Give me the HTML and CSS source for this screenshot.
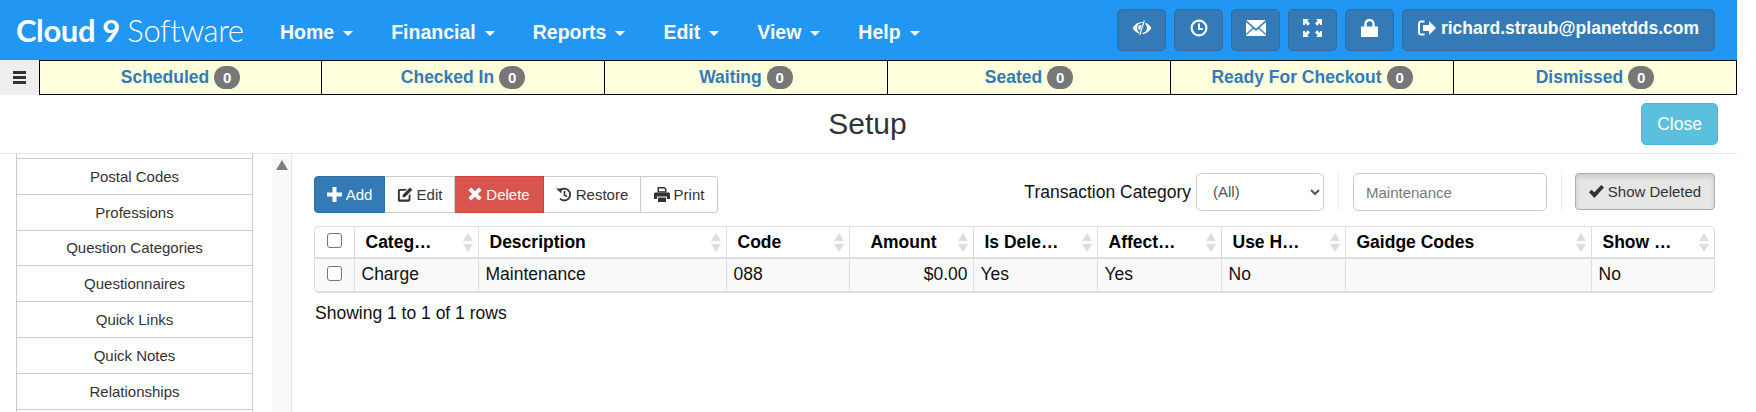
FILE: index.html
```html
<!DOCTYPE html>
<html lang="en">
<head>
  <meta charset="UTF-8" />
  <title>Setup</title>
  <link rel="stylesheet" href="styles.css">
</head>
<body>

<div class="page">
  <div class="navbar">
    <div class="logo"><b>Cloud 9</b> <span>Software</span></div>
    <ul class="menu">
      <li>Home<i class="caret"></i></li>
      <li>Financial<i class="caret"></i></li>
      <li>Reports<i class="caret"></i></li>
      <li>Edit<i class="caret"></i></li>
      <li>View<i class="caret"></i></li>
      <li>Help<i class="caret"></i></li>
    </ul>
    <div class="nav-buttons">
      <button class="nav-btn">
        <svg width="20" height="16" viewBox="0 0 20 16"><path d="M.5 8C3 4 6.500 2 10 2s7 2 9.500 6c-2.500 4-6 6-9.500 6S3 12 .5 8z"/><circle cx="10" cy="8" r="5" fill="#337ab7"/><circle cx="8.800" cy="7.500" r="2.600"/><path d="M12.800 0L7.800 16" stroke="#337ab7" stroke-width="3"/><path d="M12.300 .5L7.800 15" stroke="#fff" stroke-width="1.200"/></svg>
      </button>
      <button class="nav-btn">
        <svg width="18" height="18" viewBox="0 0 18 18"><circle cx="9" cy="9" r="7.400" fill="none" stroke="#fff" stroke-width="2.200"/><path d="M9 4.500V10h4" fill="none" stroke="#fff" stroke-width="2"/></svg>
      </button>
      <button class="nav-btn">
        <svg width="20" height="16" viewBox="0 0 20 16"><path d="M0 0h20L10 8.800z"/><path d="M0 2v12l6.500-6.300z"/><path d="M20 2v12l-6.500-6.300z"/><path d="M0 16v-.6l7.500-6.600L10 11l2.500-2.200 7.500 6.600v.6z"/></svg>
      </button>
      <button class="nav-btn">
        <svg width="19" height="18" viewBox="0 0 19 18"><path d="M0 0h6L4.200 1.800 7 4.600 4.800 6.800 2 4V6H0z"/><path d="M19 0h-6l1.800 1.800L12 4.600l2.200 2.200L17 4v2h2z"/><path d="M0 18h6l-1.800-1.800L7 13.400l-2.200-2.200L2 14v-2H0z"/><path d="M19 18h-6l1.800-1.800L12 13.400l2.200-2.200L17 14v-2h2z"/></svg>
      </button>
      <button class="nav-btn">
        <svg width="17" height="18" viewBox="0 0 17 18"><path d="M0 7.500h17V18H0z"/><path d="M4.500 8.500V5a4 4 0 0 1 8 0v3.500" fill="none" stroke="#fff" stroke-width="2.400"/></svg>
      </button>
      <button class="nav-btn user-btn">
        <svg width="18" height="16" viewBox="0 0 18 16"><path d="M6.500 1.500H3A2 2 0 0 0 1 3.500v9a2 2 0 0 0 2 2h3.500" fill="none" stroke="#fff" stroke-width="2"/><path d="M5 5h6V1l7 7-7 7v-4H5z"/></svg>
        richard.straub@planetdds.com
      </button>
    </div>
  </div>

  <div class="status-bar">
    <div class="side-toggle"><span class="burger"></span></div>
    <div class="tab">Scheduled <span class="badge">0</span></div>
    <div class="tab">Checked In <span class="badge">0</span></div>
    <div class="tab">Waiting <span class="badge">0</span></div>
    <div class="tab">Seated <span class="badge">0</span></div>
    <div class="tab">Ready For Checkout <span class="badge">0</span></div>
    <div class="tab">Dismissed <span class="badge">0</span></div>
  </div>

  <div class="title-row">
    <h1>Setup</h1>
    <button class="close-btn">Close</button>
  </div>

  <div class="main">
    <div class="sidebar">
      <ul class="side-list">
        <li class="sliver"></li>
        <li>Postal Codes</li>
        <li>Professions</li>
        <li>Question Categories</li>
        <li>Questionnaires</li>
        <li>Quick Links</li>
        <li>Quick Notes</li>
        <li>Relationships</li>
      </ul>
      <div class="side-scroll"><i class="arrow-up"></i></div>
    </div>

    <div class="content">
      <div class="toolbar">
        <div class="btn-group">
          <button class="btn add">
            <svg width="15" height="15" viewBox="0 0 15 15"><path d="M5.500 0h4v5.500H15v4H9.500V15h-4V9.500H0v-4h5.500z"/></svg>
            Add
          </button>
          <button class="btn edit">
            <svg width="16" height="15" viewBox="0 0 16 15"><path d="M2.500 2H10L8.200 3.800H3.500a.7.7 0 0 0-.7.7v7.200c0 .4.300.7.700.7h7.400a.7.7 0 0 0 .7-.7V8.500l1.800-1.800v5.800c0 1.300-1 2.300-2.300 2.300H2.500C1.200 14.800.9 13.800.9 12.500V4.300C.9 3 1.200 2 2.500 2z"/><path d="M13 .5l2.300 2.300-7 7-3 .7.700-3z"/></svg>
            Edit
          </button>
          <button class="btn del">
            <svg width="14" height="14" viewBox="0 0 14 14"><path d="M3.200.4L7 4.200 10.800.4l2.800 2.800L9.800 7l3.800 3.800-2.800 2.800L7 9.800l-3.800 3.800-2.800-2.800L4.200 7 .4 3.200z"/></svg>
            Delete
          </button>
          <button class="btn restore">
            <svg width="16" height="15" viewBox="0 0 16 15"><path d="M3.600 4A5.900 5.900 0 1 1 4 11.700" fill="none" stroke="#333" stroke-width="1.800"/><path d="M0 1.500h5.500V6.500z"/><path d="M8.500 4v4l2.500 1.600" fill="none" stroke="#333" stroke-width="1.600"/></svg>
            Restore
          </button>
          <button class="btn print">
            <svg width="16" height="15" viewBox="0 0 16 15"><path d="M3.500 0h7L12.500 2v3.500h-9zM5 1.500v2.800h6V2.600L10 1.500z"/><path d="M1.500 5.500h13c.8 0 1.500.7 1.500 1.500v5h-3V9.500H3V12H0V7c0-.8.700-1.500 1.500-1.500z"/><path d="M4 10.500h8V15H4z"/></svg>
            Print
          </button>
        </div>
        <div class="filters">
          <label class="filter-label">Transaction Category</label>
          <select class="filter-select"><option>(All)</option></select>
          <span class="sep"></span>
          <input class="filter-input" type="text" value="Maintenance" />
          <span class="sep"></span>
          <button class="show-deleted">
            <svg width="15" height="13" viewBox="0 0 15 13"><path d="M0 7.200l2.600-2.500 2.700 2.600L12.300 0 15 2.500 5.400 13z"/></svg>
            Show Deleted
          </button>
        </div>
      </div>

      <div class="table-wrap">
        <table class="grid">
          <colgroup>
            <col class="c-check"><col class="c-cat"><col class="c-desc"><col class="c-code"><col class="c-amt"><col class="c-del"><col class="c-aff"><col class="c-use"><col class="c-gaidge"><col>
          </colgroup>
          <thead>
            <tr>
              <th class="check-cell"><input class="check" type="checkbox" /></th>
              <th><div class="th-in"><span class="th-text">Categ…</span><i class="sort"></i></div></th>
              <th><div class="th-in"><span class="th-text">Description</span><i class="sort"></i></div></th>
              <th><div class="th-in"><span class="th-text">Code</span><i class="sort"></i></div></th>
              <th><div class="th-in right"><span class="th-text">Amount</span><i class="sort"></i></div></th>
              <th><div class="th-in"><span class="th-text">Is Dele…</span><i class="sort"></i></div></th>
              <th><div class="th-in"><span class="th-text">Affect…</span><i class="sort"></i></div></th>
              <th><div class="th-in"><span class="th-text">Use H…</span><i class="sort"></i></div></th>
              <th><div class="th-in"><span class="th-text">Gaidge Codes</span><i class="sort"></i></div></th>
              <th><div class="th-in"><span class="th-text">Show …</span><i class="sort"></i></div></th>
            </tr>
          </thead>
          <tbody>
            <tr>
              <td class="check-cell"><input class="check" type="checkbox" /></td>
              <td>Charge</td>
              <td>Maintenance</td>
              <td>088</td>
              <td class="num">$0.00</td>
              <td>Yes</td>
              <td>Yes</td>
              <td>No</td>
              <td></td>
              <td>No</td>
            </tr>
          </tbody>
        </table>
      </div>
      <p class="rows-info">Showing 1 to 1 of 1 rows</p>
    </div>
  </div>
</div>

</body>
</html>
```

FILE: styles.css
```css
html, body {
  margin: 0;
  padding: 0;
  height: 412px;
  overflow: hidden;
  background-color: white;
  font-family: 'Liberation Sans', Arial, sans-serif;
  color: #333;
}

.page {
  width: 1737px;
  height: 412px;
  display: flex;
  flex-direction: column;
}

button {
  font-family: inherit;
  cursor: pointer;
}

svg {
  fill: currentColor;
  flex: none;
}

/* top bar */
.navbar {
  height: 60px;
  flex: none;
  background-color: #2196f3;
  color: white;
  display: flex;
  align-items: center;
  box-sizing: border-box;
  padding: 0 22px 0 16px;
}

.logo {
  width: 245px;
  font-family: Lato, sans-serif;
  font-size: 31px;
  white-space: nowrap;
  letter-spacing: -0.4px;
}

.logo b {
  font-weight: 700;
}

.logo span {
  font-weight: 300;
}

.menu {
  list-style: none;
  margin: 0;
  padding: 4px 0 0;
  display: flex;
  flex: 1;
}

.menu li {
  padding: 0 19px;
  font-size: 19.5px;
  font-weight: bold;
  white-space: nowrap;
}

.caret {
  display: inline-block;
  margin-left: 9px;
  vertical-align: 3px;
  border-top: 5px solid white;
  border-left: 5px solid transparent;
  border-right: 5px solid transparent;
}

.nav-buttons {
  display: flex;
  gap: 8px;
}

.nav-btn {
  width: 49px;
  height: 42px;
  padding: 0 0 4px;
  background-color: #337ab7;
  border: 1px solid #2e6da4;
  border-radius: 5px;
  color: white;
  display: flex;
  align-items: center;
  justify-content: center;
}

.user-btn {
  width: 313px;
  gap: 5px;
  font-size: 17.5px;
  font-weight: bold;
}

/* status tabs */
.status-bar {
  height: 35px;
  flex: none;
  display: flex;
}

.side-toggle {
  width: 39px;
  background-color: #eee;
  display: flex;
  align-items: center;
  justify-content: center;
}

.burger {
  width: 13px;
  height: 3px;
  background-color: #333;
  box-shadow: 0 5px 0 #333, 0 -5px 0 #333;
}

.tab {
  width: 283px;
  box-sizing: border-box;
  background-color: #ffd;
  border: 1px solid black;
  border-left-width: 0;
  display: flex;
  align-items: center;
  justify-content: center;
  gap: 5px;
  color: #337ab7;
  font-size: 17.5px;
  font-weight: bold;
}

.side-toggle + .tab {
  border-left-width: 1px;
}

.badge {
  min-width: 26px;
  height: 23px;
  border-radius: 12px;
  background-color: #777;
  color: white;
  font-size: 15px;
  line-height: 23px;
  text-align: center;
}

/* title */
.title-row {
  height: 59px;
  flex: none;
  box-sizing: border-box;
  border-bottom: 1px solid #e5e5e5;
  display: flex;
  align-items: center;
  justify-content: center;
  position: relative;
}

.title-row h1 {
  margin: 0 2px 0 0;
  font-size: 30px;
  font-weight: normal;
  color: #333;
}

.close-btn {
  position: absolute;
  left: 1641px;
  top: 8px;
  width: 77px;
  height: 42px;
  padding: 0;
  background-color: #5bc0de;
  border: 1px solid #46b8da;
  border-radius: 5px;
  color: white;
  font-size: 17.5px;
}

/* left list */
.main {
  flex: 1;
  display: flex;
  min-height: 0;
}

.sidebar {
  width: 292px;
  flex: none;
  display: flex;
  box-sizing: border-box;
  border-right: 1px solid #e5e5e5;
  padding-left: 16px;
}

.side-list {
  list-style: none;
  margin: 0;
  padding: 0;
  width: 237px;
  flex: none;
  box-sizing: border-box;
  border-left: 1px solid #ccc;
  border-right: 1px solid #ccc;
}

.side-list li {
  height: 35.8px;
  box-sizing: border-box;
  border-bottom: 1px solid #ccc;
  display: flex;
  align-items: center;
  justify-content: center;
  font-size: 15px;
  color: #333;
}

.side-list li.sliver {
  height: 5px;
}

.side-scroll {
  margin-left: 19px;
  flex: 1;
  background-color: #f9f9f9;
  display: flex;
  justify-content: center;
  padding-top: 6px;
}

.arrow-up {
  width: 0;
  height: 0;
  border-bottom: 10px solid #808080;
  border-left: 6px solid transparent;
  border-right: 6px solid transparent;
}

/* right side */
.content {
  flex: 1;
  min-width: 0;
  box-sizing: border-box;
  padding: 19px 22px 0 22px;
}

.toolbar {
  display: flex;
  justify-content: space-between;
  align-items: flex-start;
  height: 53px;
}

.btn-group {
  display: flex;
  margin-top: 3px;
}

.btn {
  height: 37px;
  box-sizing: border-box;
  padding: 0 0 1px;
  display: flex;
  align-items: center;
  justify-content: center;
  gap: 4px;
  font-size: 15px;
  border: 1px solid #ccc;
  border-left-width: 0;
  background-color: white;
  color: #333;
}

.btn.add {
  width: 71px;
  background-color: #337ab7;
  border: 1px solid #2e6da4;
  color: white;
  border-radius: 4px 0 0 4px;
}

.btn.edit { width: 70px; }

.btn.del {
  width: 89px;
  background-color: #d9534f;
  border-color: #d43f3a;
  color: white;
}

.btn.restore { width: 97px; }

.btn.print {
  width: 77px;
  border-radius: 0 4px 4px 0;
}

.filters {
  display: flex;
  align-items: center;
  margin-top: -1px;
}

.filter-label {
  font-size: 17.5px;
  color: #111;
  margin-right: 5px;
  margin-top: 1px;
}

.filter-select {
  width: 128px;
  height: 38px;
  box-sizing: border-box;
  padding: 0 12px;
  background-color: white;
  border: 1px solid #ccc;
  border-radius: 5px;
  font-family: inherit;
  font-size: 15px;
  color: #555;
}

.filter-input {
  width: 194px;
  height: 38px;
  box-sizing: border-box;
  padding: 2px 12px 0;
  border: 1px solid #ccc;
  border-radius: 5px;
  font-family: inherit;
  font-size: 15px;
  color: #777;
}

.sep {
  width: 1px;
  height: 39px;
  margin: 0 14px;
  background-color: #eee;
}

.filter-input + .sep {
  margin-right: 13px;
}

.show-deleted {
  width: 140px;
  height: 37px;
  margin-bottom: 1px;
  padding: 0;
  display: flex;
  align-items: center;
  justify-content: center;
  gap: 4px;
  background-color: #e6e6e6;
  border: 1px solid #adadad;
  border-radius: 4px;
  box-shadow: inset 0 3px 5px rgba(0, 0, 0, 0.125);
  font-size: 15px;
  color: #333;
}

/* table */
.table-wrap {
  width: 1401px;
  box-sizing: border-box;
  border: 1px solid #ddd;
  border-bottom-width: 2px;
  border-radius: 5px;
  overflow: hidden;
}

.grid {
  width: 100%;
  border-collapse: collapse;
  table-layout: fixed;
  font-size: 17.5px;
  color: #111;
}

.c-check { width: 39px; }
.c-cat { width: 124px; }
.c-desc { width: 248px; }
.c-code { width: 123px; }
.c-amt { width: 124px; }
.c-del { width: 124px; }
.c-aff { width: 124px; }
.c-use { width: 124px; }
.c-gaidge { width: 246px; }

.grid th {
  height: 30px;
  padding: 0;
  border-bottom: 2px solid #ddd;
  border-left: 1px solid #ddd;
  font-weight: bold;
  text-align: left;
  color: #000;
}

.grid td {
  height: 30px;
  padding: 0 7px 2px;
  border-left: 1px solid #ddd;
  background-color: #f9f9f9;
}

.grid .check-cell {
  border-left: 0;
  padding: 0;
  text-align: center;
}

.grid td.num {
  text-align: right;
  padding-right: 5px;
}

.th-in {
  display: flex;
  align-items: center;
  justify-content: space-between;
  padding: 0 5px 0 11px;
}

.th-in.right .th-text {
  margin-left: auto;
  margin-right: 21px;
}

.check {
  appearance: none;
  display: block;
  width: 15px;
  height: 15px;
  margin: 0 auto 4px;
  border: 1px solid #767676;
  border-radius: 3px;
  background-color: white;
}

.sort {
  flex: none;
  display: block;
  width: 10px;
  height: 19px;
  position: relative;
}

.sort::before,
.sort::after {
  content: "";
  position: absolute;
  left: 0;
  border-left: 5px solid transparent;
  border-right: 5px solid transparent;
}

.sort::before {
  top: 0;
  border-bottom: 8px solid #ddd;
}

.sort::after {
  bottom: 0;
  border-top: 8px solid #ddd;
}

.rows-info {
  margin: 10px 0 0 1px;
  font-size: 17.5px;
  color: #111;
}
```
